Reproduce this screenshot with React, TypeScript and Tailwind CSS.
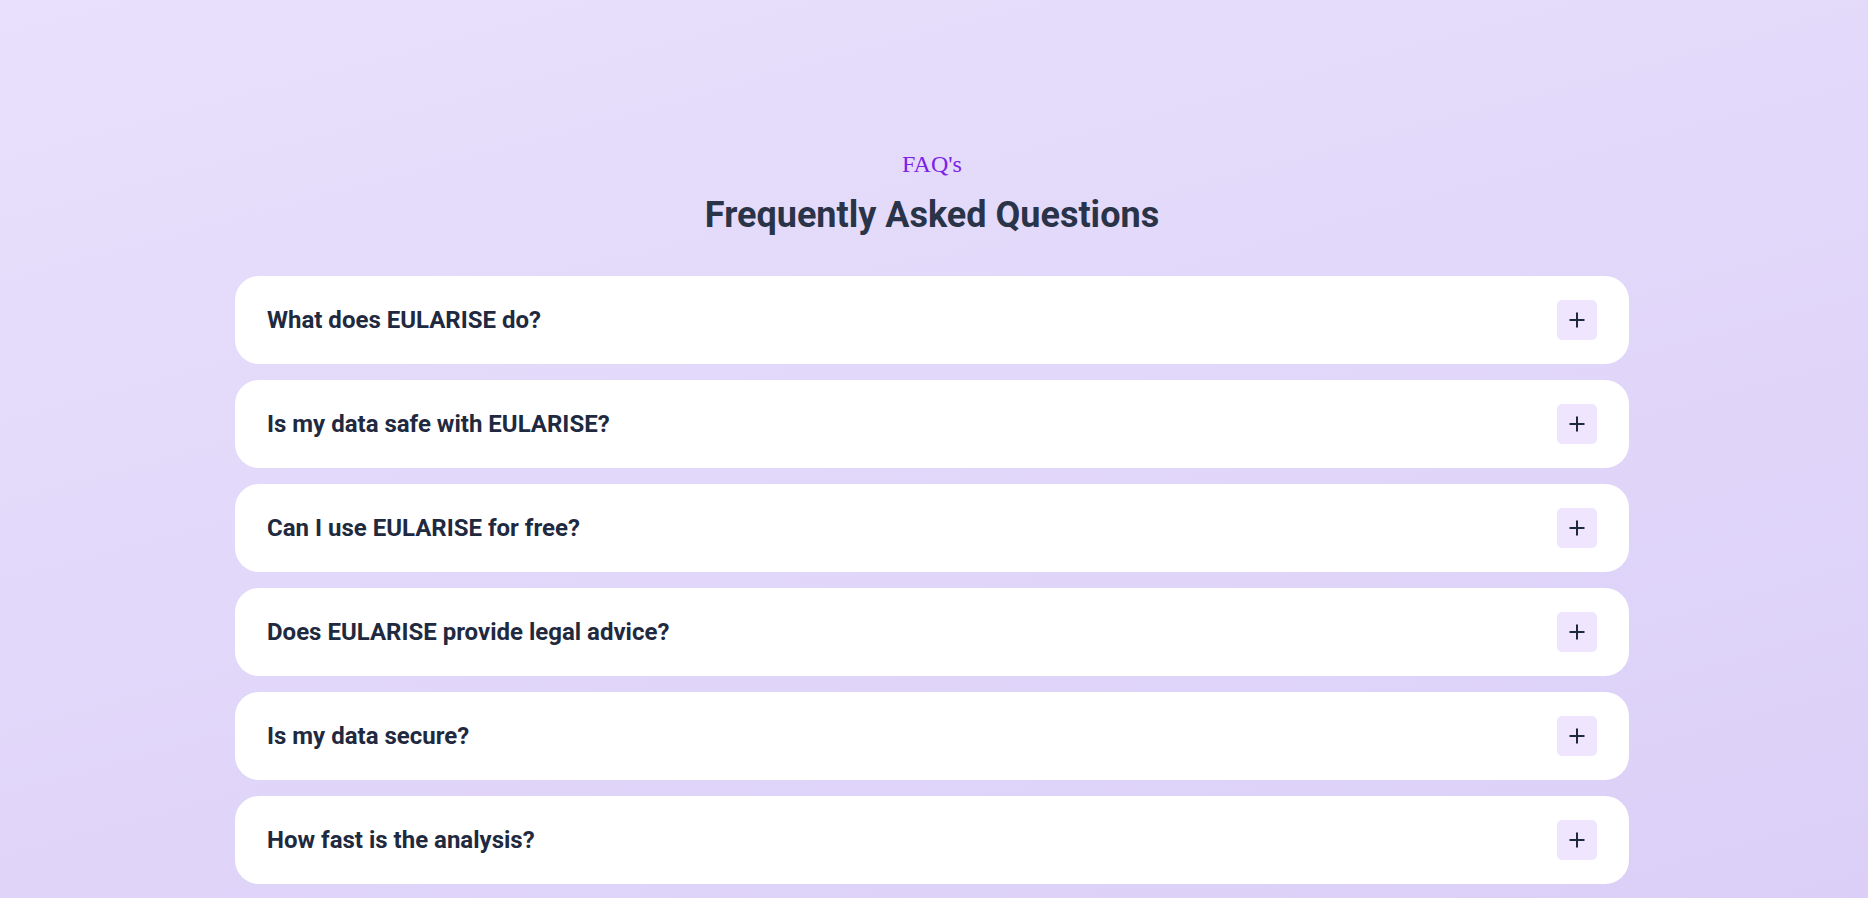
import React from "react";

const questions = [
  "What does EULARISE do?",
  "Is my data safe with EULARISE?",
  "Can I use EULARISE for free?",
  "Does EULARISE provide legal advice?",
  "Is my data secure?",
  "How fast is the analysis?",
];

export default function App() {
  return (
    <div className="min-h-screen w-full bg-[linear-gradient(165deg,#e8e0fc_0%,#dbcff7_100%)] pt-[148px] pb-[14px] font-['Roboto',sans-serif]">
      <div className="ml-[235px] w-[1394px] flex flex-col items-center">
        <p className="font-['Liberation_Serif',serif] text-2xl leading-[32px] text-[#7c22e6] mb-[15px]">
          FAQ's
        </p>
        <h2 className="text-4xl leading-[40px] font-bold text-[#2a3449] mb-[41px]">
          Frequently Asked Questions
        </h2>
        <div className="w-full flex flex-col gap-4">
          {questions.map((q) => (
            <div
              key={q}
              className="bg-white rounded-3xl px-8 py-6 flex items-center justify-between"
            >
              <span className="text-2xl font-bold text-[#1f2a40] leading-[32px]">{q}</span>
              <button className="w-10 h-10 rounded-[5px] bg-[#efe5fe] flex items-center justify-center">
                <svg width="16" height="16" viewBox="0 0 16 16" fill="none">
                  <path d="M8 0.5v15M0.5 8h15" stroke="#1e293b" strokeWidth="2" />
                </svg>
              </button>
            </div>
          ))}
        </div>
      </div>
    </div>
  );
}
